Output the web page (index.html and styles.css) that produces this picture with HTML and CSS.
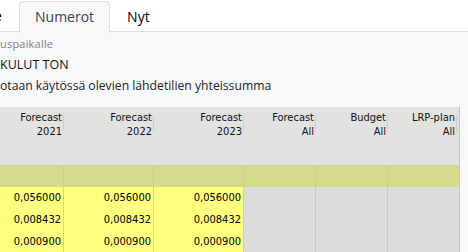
FILE: index.html
```html
<!DOCTYPE html>
<html>
<head>
	<meta charset="UTF-8">
	<title>Numerot</title>
	<link rel="stylesheet" href="styles.css">
</head>
<body>
	<div class="tabs">
		<div class="tab first">e</div>
		<div class="tab active">Numerot</div>
		<div class="tab">Nyt</div>
	</div>
	<div class="info">
		<div class="label">uspaikalle</div>
		<div class="title">KULUT TON</div>
		<div class="desc">otaan käytössä olevien lähdetilien yhteissumma</div>
	</div>
	<div class="grid">
		<div class="head"><span>Forecast<br>2021</span></div>
		<div class="head"><span>Forecast<br>2022</span></div>
		<div class="head"><span>Forecast<br>2023</span></div>
		<div class="head"><span>Forecast<br>All</span></div>
		<div class="head"><span>Budget<br>All</span></div>
		<div class="head last"><span>LRP-plan<br>All</span></div>

		<div class="cell sum"></div>
		<div class="cell sum"></div>
		<div class="cell sum"></div>
		<div class="cell sum"></div>
		<div class="cell sum"></div>
		<div class="cell sum"></div>

		<div class="cell val">0,056000</div>
		<div class="cell val">0,056000</div>
		<div class="cell val">0,056000</div>
		<div class="cell off"></div>
		<div class="cell off"></div>
		<div class="cell off"></div>

		<div class="cell val">0,008432</div>
		<div class="cell val">0,008432</div>
		<div class="cell val">0,008432</div>
		<div class="cell off"></div>
		<div class="cell off"></div>
		<div class="cell off"></div>

		<div class="cell val">0,000900</div>
		<div class="cell val">0,000900</div>
		<div class="cell val">0,000900</div>
		<div class="cell off"></div>
		<div class="cell off"></div>
		<div class="cell off"></div>
	</div>
</body>
</html>
```
FILE: styles.css
```css
html, body {
	margin: 0;
	overflow: hidden;
}
body {
	font-family: "Open Sans", sans-serif;
	background-color: #f7f8fa;
	color: #222;
}
.tabs {
	display: flex;
	height: 31px;
	background-color: #fff;
	border-bottom: 1px solid #dedede;
}
.tab {
	padding: 0 16px;
	font-size: 14px;
	line-height: 30px;
	color: #000;
	border: 1px solid transparent;
	border-bottom: none;
	margin-top: 1px;
	margin-bottom: -1px;
}
.tab.first {
	width: 4px;
	padding: 0 16px 0 0;
	margin-left: -1px;
	text-indent: -5px;
	overflow: hidden;
	border: none;
}
.tab.active {
	padding: 0 15px;
	background-color: #f7f8fa;
	border-color: #dedede;
	border-radius: 4px 4px 0 0;
	color: #3c4250;
	height: 31px;
}
.info {
	height: 75px;
	padding-top: 4px;
	box-sizing: border-box;
}
.label {
	font-size: 11px;
	color: #808080;
	line-height: 15px;
	letter-spacing: 0.2px;
}
.title {
	font-size: 12.5px;
	line-height: 17px;
	margin-top: 5px;
	color: #111;
}
.desc {
	font-size: 12.2px;
	line-height: 17px;
	margin-top: 4px;
	color: #222;
}
.grid {
	display: grid;
	grid-template-columns: 90px 90px 90px 72px 72px 72px;
	margin-left: -26px;
	width: 486px;
	font-family: "DejaVu Sans", sans-serif;
	font-stretch: condensed;
	font-size: 11px;
	color: #000;
}
.head {
	height: 58px;
	box-sizing: border-box;
	padding: 4px 2px 0 0;
	text-align: right;
	line-height: 14px;
	background: linear-gradient(#cfcfcf, #cfcfcf) right 8px / 1px 16px no-repeat, #e2e2e0;
	color: #111;
}
.head.last {
	border-right: 1px solid #c4c4c4;
	padding-right: 4px;
	background: linear-gradient(#cfcfcf, #cfcfcf) right 2px top 8px / 1px 16px no-repeat, #e2e2e0;
}
.cell {
	box-sizing: border-box;
	height: 22px;
	line-height: 22px;
	padding-right: 2px;
	text-align: right;
	border-right: 1px solid #cbcbcb;
}
.sum {
	background-color: #d3db8c;
	border-right-color: #c6cba6;
}
.val {
	background-color: #ffff80;
}
.off {
	background-color: #dcdcdc;
	border-right-color: #c8c8c8;
}
.grid .cell:nth-child(6n) {
	border-right-color: #c4c4c4;
}
```
